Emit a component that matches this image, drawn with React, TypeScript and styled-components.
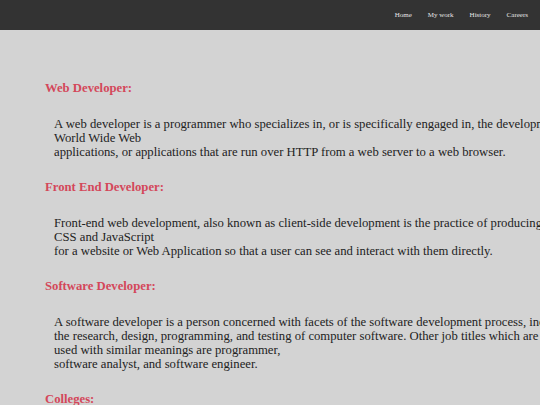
import * as React from 'react';
import styled, { createGlobalStyle } from 'styled-components';

const GlobalStyle = createGlobalStyle`
  html, body {
    margin: 0;
    padding: 0;
    background: #d3d3d3;
    overflow: hidden;
  }
  body {
    font-family: 'Liberation Serif', 'Times New Roman', serif;
  }
`;

const NavBar = styled.nav`
  height: 30px;
  background: #333333;
  display: flex;
  align-items: center;
  justify-content: flex-end;
  padding-right: 12px;
  gap: 16px;
`;

const NavLink = styled.a`
  color: #e6e6e6;
  font-size: 7px;
  text-decoration: none;
  cursor: pointer;
`;

const Main = styled.main`
  padding: 51px 0 0 45px;
`;

const Section = styled.section`
  margin-bottom: 21px;
`;

const Heading = styled.h3`
  margin: 0 0 22px;
  font-size: 12.7px;
  line-height: 14px;
  font-weight: bold;
  color: #d4475a;
`;

const Para = styled.p`
  margin: 0;
  padding-left: 9px;
  font-size: 12.7px;
  line-height: 14px;
  color: #222;
  white-space: nowrap;
`;

const sections: { title: string; lines: string[] }[] = [
  {
    title: 'Web Developer:',
    lines: [
      'A web developer is a programmer who specializes in, or is specifically engaged in, the development of',
      'World Wide Web',
      'applications, or applications that are run over HTTP from a web server to a web browser.',
    ],
  },
  {
    title: 'Front End Developer:',
    lines: [
      'Front-end web development, also known as client-side development is the practice of producing HTML,',
      'CSS and JavaScript',
      'for a website or Web Application so that a user can see and interact with them directly.',
    ],
  },
  {
    title: 'Software Developer:',
    lines: [
      'A software developer is a person concerned with facets of the software development process, including',
      'the research, design, programming, and testing of computer software. Other job titles which are often',
      'used with similar meanings are programmer,',
      'software analyst, and software engineer.',
    ],
  },
  {
    title: 'Colleges:',
    lines: [],
  },
];

export default function App() {
  return (
    <>
      <GlobalStyle />
      <NavBar>
        <NavLink>Home</NavLink>
        <NavLink>My work</NavLink>
        <NavLink>History</NavLink>
        <NavLink>Careers</NavLink>
      </NavBar>
      <Main>
        {sections.map(s => (
          <Section key={s.title}>
            <Heading>{s.title}</Heading>
            {s.lines.length > 0 && (
              <Para>
                {s.lines.map((l, i) => (
                  <React.Fragment key={i}>
                    {i > 0 && <br />}
                    {l}
                  </React.Fragment>
                ))}
              </Para>
            )}
          </Section>
        ))}
      </Main>
    </>
  );
}
